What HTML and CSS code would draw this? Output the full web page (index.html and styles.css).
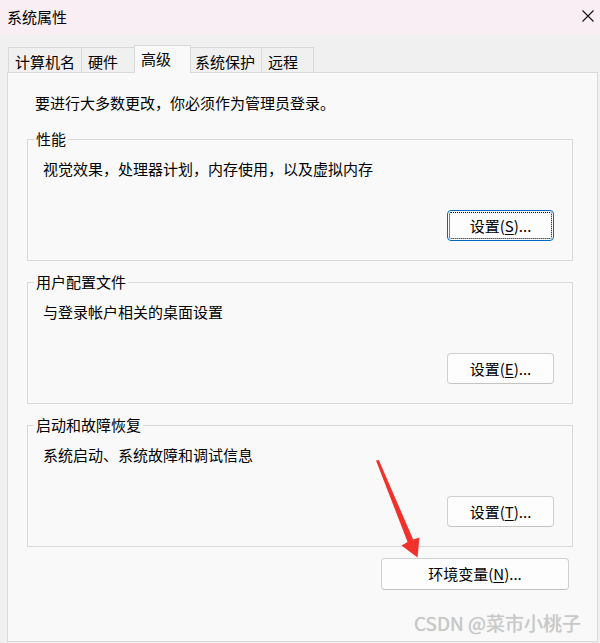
FILE: index.html
```html
<!DOCTYPE html>
<html lang="zh-CN">
<head>
<meta charset="utf-8">
<title>系统属性</title>
<link rel="stylesheet" href="styles.css">
</head>
<body>
<div class="window">
  <div class="titlebar">
    <span class="title">系统属性</span>
    <svg class="close" width="12" height="12" viewBox="0 0 12 12"><path d="M0.5 0.5 L11.5 11.5 M11.5 0.5 L0.5 11.5" stroke="#111" stroke-width="1.1" fill="none"/></svg>
  </div>
  <div class="tabs">
    <div class="tab t1">计算机名</div>
    <div class="tab t2">硬件</div>
    <div class="tab t3 active">高级</div>
    <div class="tab t4">系统保护</div>
    <div class="tab t5">远程</div>
  </div>
  <div class="panel">
    <p class="intro">要进行大多数更改，你必须作为管理员登录。</p>
    <fieldset class="group">
      <legend>性能</legend>
      <p class="desc">视觉效果，处理器计划，内存使用，以及虚拟内存</p>
      <div class="btnrow"><button class="btn focus">设置(<u>S</u>)...</button></div>
    </fieldset>
    <fieldset class="group">
      <legend>用户配置文件</legend>
      <p class="desc">与登录帐户相关的桌面设置</p>
      <div class="btnrow"><button class="btn">设置(<u>E</u>)...</button></div>
    </fieldset>
    <fieldset class="group">
      <legend>启动和故障恢复</legend>
      <p class="desc">系统启动、系统故障和调试信息</p>
      <div class="btnrow"><button class="btn">设置(<u>T</u>)...</button></div>
    </fieldset>
    <div class="envrow"><button class="btn env">环境变量(<u>N</u>)...</button></div>
  </div>
  <svg class="arrow" width="600" height="643" viewBox="0 0 600 643"><polygon points="376,460.5 378.8,460 413.2,539.5 419.5,537.5 417.5,557.5 401.5,545.5 407.6,542" fill="#f2312b"/></svg>
  <div class="watermark">CSDN @菜市小桃子</div>
</div>
</body>
</html>
```

FILE: styles.css
```css
* { box-sizing: border-box; }
html, body { margin: 0; padding: 0; }
body {
  width: 600px;
  height: 643px;
  overflow: hidden;
  background: #f0f0f0;
  font-family: "Noto Sans CJK SC", "Microsoft YaHei", sans-serif;
  font-size: 15px;
  color: #000;
}
.window { position: relative; width: 600px; height: 643px; }
.titlebar {
  height: 35px;
  background: #f9eef3;
  display: flex;
  align-items: center;
  justify-content: space-between;
  padding-left: 7px;
  padding-right: 6px;
}
.title { line-height: 20px; margin-top: -2px; }
.close { display: block; margin-top: -3px; }
.tabs {
  display: flex;
  align-items: flex-end;
  padding-left: 8px;
  margin-top: 10px;
  height: 27px;
  position: relative;
  z-index: 2;
}
.tab {
  height: 25px;
  border: 1px solid #d9d9d9;
  border-bottom: none;
  background: #f0f0f0;
  line-height: 20px;
  padding: 4px 0 0 6px;
  margin-left: -1px;
  white-space: nowrap;
}
.tab:first-child { margin-left: 0; }
.t1 { width: 74px; }
.t2 { width: 54px; }
.t3 { width: 57px; }
.t4 { width: 72px; padding-left: 4px; }
.t5 { width: 53px; }
.tab.active {
  height: 28px;
  margin-bottom: -1px;
  background: #f9f9f9;
  padding-top: 3px;
  position: relative;
  z-index: 3;
}
.panel {
  margin-left: 7px;
  width: 591px;
  height: 570px;
  background: #f9f9f9;
  border: 1px solid #d9d9d9;
  padding: 20px 23px 0 19px;
}
.intro { margin: 0 0 16px 8px; line-height: 20px; }
.group {
  margin: 0 0 11px 0;
  width: 546px;
  height: 132px;
  border: 1px solid #d9d9d9;
  padding: 0 18px 0 15px;
}
legend {
  margin-left: -9px;
  padding: 0 2px;
  line-height: 20px;
}
.desc { margin: 10px 0 0 0; line-height: 20px; }
.btnrow { display: flex; justify-content: flex-end; margin-top: 31px; }
.btn {
  font-family: inherit;
  font-size: 15px;
  color: #000;
  width: 107px;
  height: 31px;
  background: #fdfdfd;
  border: 1px solid #d0d0d0;
  border-bottom-color: #c4c4c4;
  border-radius: 4px;
  padding: 0;
  line-height: 20px;
}
.btn u { text-underline-offset: 2px; }
.btn.focus {
  border: 1px solid #0067c0;
  outline: 1px dotted #000;
  outline-offset: -3px;
}
.envrow { display: flex; justify-content: flex-end; margin-top: 8px; padding-right: 5px; }
.env { width: 188px; height: 32px; }
.arrow { position: absolute; left: 0; top: 0; pointer-events: none; }
.watermark {
  position: absolute;
  left: 414px;
  top: 611px;
  font-family: "Noto Sans CJK SC", "Liberation Sans", sans-serif;
  font-size: 19px;
  line-height: 24px;
  color: #c8c8c8;
  text-shadow: 0 0 1px rgba(120, 120, 120, 0.35);
  white-space: nowrap;
}
```
